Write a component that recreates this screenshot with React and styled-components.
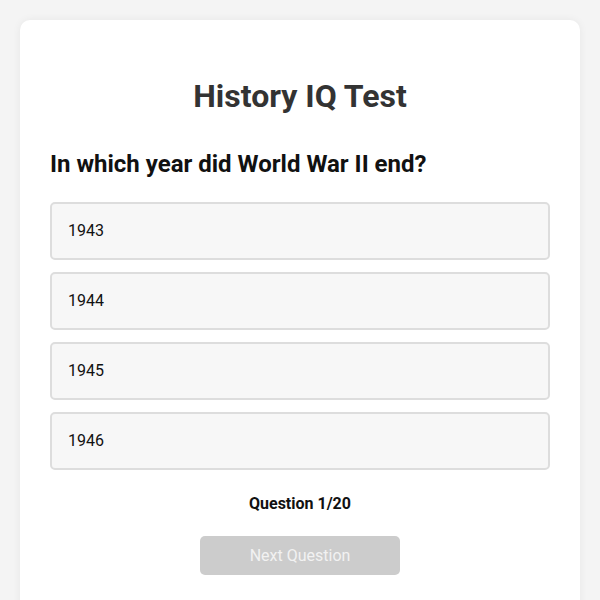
import React, { useState } from "react";
import styled, { createGlobalStyle } from "styled-components";

const GlobalStyle = createGlobalStyle`
  body {
    margin: 0;
    background: #f4f4f4;
    font-family: Roboto, "Liberation Sans", sans-serif;
  }
`;

const Page = styled.div`
  padding: 20px 20px 0;
`;

const Card = styled.div`
  background: #fff;
  border-radius: 10px;
  box-shadow: 0 0 8px rgba(0, 0, 0, 0.06);
  padding: 30px 30px 40px;
  min-height: 560px;
  box-sizing: border-box;
`;

const Title = styled.h1`
  text-align: center;
  color: #333;
  font-size: 32px;
  font-weight: 700;
  margin: 27px 0 35px;
`;

const Question = styled.h2`
  color: #111;
  font-size: 24px;
  font-weight: 700;
  margin: 0 0 24px;
`;

const Options = styled.div`
  display: flex;
  flex-direction: column;
  gap: 12px;
`;

const Option = styled.div`
  font-size: 16px;
  line-height: 22px;
  color: #111;
  background: ${(p) => (p.$selected ? "#e8f0fe" : "#f7f7f7")};
  border: 2px solid #ddd;
  border-radius: 5px;
  padding: 16px;
  cursor: pointer;
`;

const Counter = styled.p`
  text-align: center;
  font-size: 16px;
  font-weight: 700;
  color: #111;
  margin: 24px 0 23px;
`;

const NextButton = styled.button`
  display: block;
  margin: 0 auto;
  width: 200px;
  height: 39px;
  border: none;
  border-radius: 5px;
  background: #ccc;
  color: #f2f2f2;
  font-family: inherit;
  font-size: 16px;
`;

const answers = ["1943", "1944", "1945", "1946"];

export default function App() {
  const [picked, setPicked] = useState(null);
  return (
    <Page>
      <GlobalStyle />
      <Card>
        <Title>History IQ Test</Title>
        <Question>In which year did World War II end?</Question>
        <Options>
          {answers.map((a) => (
            <Option key={a} $selected={picked === a} onClick={() => setPicked(a)}>
              {a}
            </Option>
          ))}
        </Options>
        <Counter>Question 1/20</Counter>
        <NextButton disabled={!picked}>Next Question</NextButton>
      </Card>
    </Page>
  );
}
